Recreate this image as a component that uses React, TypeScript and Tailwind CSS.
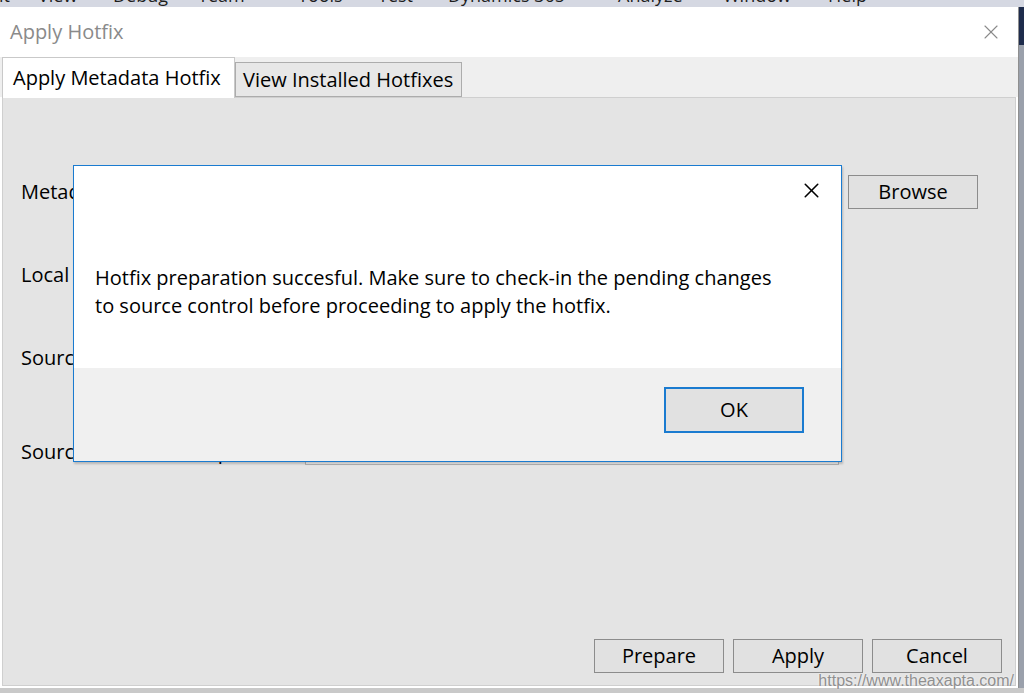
import { X } from "lucide-react";

const menuItems = [
  { label: "Edit", w: "w-[60px]" },
  { label: "View", w: "w-[75px]" },
  { label: "Debug", w: "w-[85px]" },
  { label: "Team", w: "w-[100px]" },
  { label: "Tools", w: "w-[80px]" },
  { label: "Test", w: "w-[70px]" },
  { label: "Dynamics 365", w: "w-[170px]" },
  { label: "Analyze", w: "w-[105px]" },
  { label: "Window", w: "w-[105px]" },
  { label: "Help", w: "w-[60px]" },
];

function WinButton({ children, className = "" }: { children: React.ReactNode; className?: string }) {
  return (
    <button
      className={`flex h-[34px] w-[130px] items-center justify-center border border-[#8c8c8c] bg-[#e1e1e1] text-[20px] text-black ${className}`}
    >
      {children}
    </button>
  );
}

function FieldRow({ label, children, className = "" }: { label: string; children?: React.ReactNode; className?: string }) {
  return (
    <div className={`flex h-[33px] items-center ${className}`}>
      <span className="w-[284px] shrink-0 whitespace-nowrap text-[20px] text-black">{label}</span>
      {children}
    </div>
  );
}

export default function App() {
  return (
    <div
      className="relative h-[693px] w-[1024px] overflow-hidden bg-[#d5d8e2]"
      style={{ fontFamily: '"Open Sans", "Noto Sans", sans-serif' }}
    >
      {/* menu bar of the IDE behind, only the bottom of the text shows */}
      <div className="h-[7px] overflow-hidden">
        <div className="-mt-[14px] -ml-[22px] flex text-[18px] leading-[18px] text-[#1e1e1e]">
          {menuItems.map((m) => (
            <span key={m.label} className={`${m.w} shrink-0 whitespace-nowrap`}>
              {m.label}
            </span>
          ))}
        </div>
      </div>

      <div className="flex h-[681px]">
        {/* Apply Hotfix window */}
        <div className="flex w-[1019px] flex-col border-r border-[#8f8f8f] bg-white">
          <div className="flex h-[50px] shrink-0 items-center justify-between pl-[10px] pr-[15px]">
            <span className="text-[20px] text-[#8a8a8a]">Apply Hotfix</span>
            <X className="h-[24px] w-[24px] text-[#8a8a8a]" strokeWidth={1.1} />
          </div>

          <div className="flex h-[40px] shrink-0 items-end bg-[#efefef] pl-[2px]">
            <div className="relative z-10 -mb-px flex h-[41px] w-[233px] items-center border-x border-t border-[#c9c9c9] bg-white pl-[10px] text-[20px] text-black">
              Apply Metadata Hotfix
            </div>
            <div className="flex h-[35px] w-[227px] items-center border border-[#acacac] bg-[#e7e7e7] pl-[7px] text-[20px] text-black">
              View Installed Hotfixes
            </div>
          </div>

          <div className="mx-[2px] mb-[2px] flex flex-1 flex-col border border-[#cfcfcf] bg-[#e4e4e4] pl-[18px] pr-[13px] pt-[77px] pb-[12px]">
            <FieldRow label="Metadata hotfix package">
              <div className="h-[26px] w-[534px] border border-[#b5b5b5] bg-white" />
              <WinButton className="ml-[9px] h-[33px]">Browse</WinButton>
            </FieldRow>
            <FieldRow label="Local repository path" className="mt-[50px]">
              <div className="h-[26px] w-[534px] border border-[#b5b5b5] bg-white" />
            </FieldRow>
            <FieldRow label="Source control" className="mt-[50px]">
              <div className="h-[26px] w-[534px] border border-[#b5b5b5] bg-white" />
            </FieldRow>
            <FieldRow label="Source control workspace" className="mt-[61px]">
              <div className="h-[26px] w-[534px] border border-[#b5b5b5] bg-[#f0f0f0]" />
            </FieldRow>

            <div className="mt-auto flex justify-end gap-[9px]">
              <WinButton>Prepare</WinButton>
              <WinButton>Apply</WinButton>
              <WinButton>Cancel</WinButton>
            </div>
          </div>
        </div>
        <div className="flex-1 bg-[#9aa0ab]">
          <div className="h-[38px] bg-[#1e2c4c]" />
        </div>
      </div>
      <div className="h-[5px] bg-[#c9c9c9]" />

      {/* message box over the window */}
      <div className="absolute left-[73px] top-[165px] flex h-[297px] w-[769px] flex-col border border-[#1a7bd0] bg-white shadow-[1px_2px_2px_rgba(0,0,0,0.2)]">
        <div className="relative h-[202px] shrink-0 bg-white pl-[21px] pt-[98px]">
          <X className="absolute right-[17px] top-[12px] h-[25px] w-[25px] text-black" strokeWidth={1.5} />
          <p className="text-[20px] leading-[28px] text-black">
            Hotfix preparation succesful. Make sure to check-in the pending changes
            <br />
            to source control before proceeding to apply the hotfix.
          </p>
        </div>
        <div className="flex flex-1 items-start justify-end bg-[#f0f0f0] pr-[37px] pt-[19px]">
          <button className="flex h-[46px] w-[140px] items-center justify-center border-2 border-[#1a7bd0] bg-[#e1e1e1] text-[20px] text-black">
            OK
          </button>
        </div>
      </div>

      <span
        className="absolute right-[10px] top-[672px] text-[16px] leading-[18px] text-[#8f8f8f]"
        style={{ fontFamily: '"Liberation Sans", Arial, sans-serif', textShadow: "0 0 2px #fff" }}
      >
        https://www.theaxapta.com/
      </span>
    </div>
  );
}
